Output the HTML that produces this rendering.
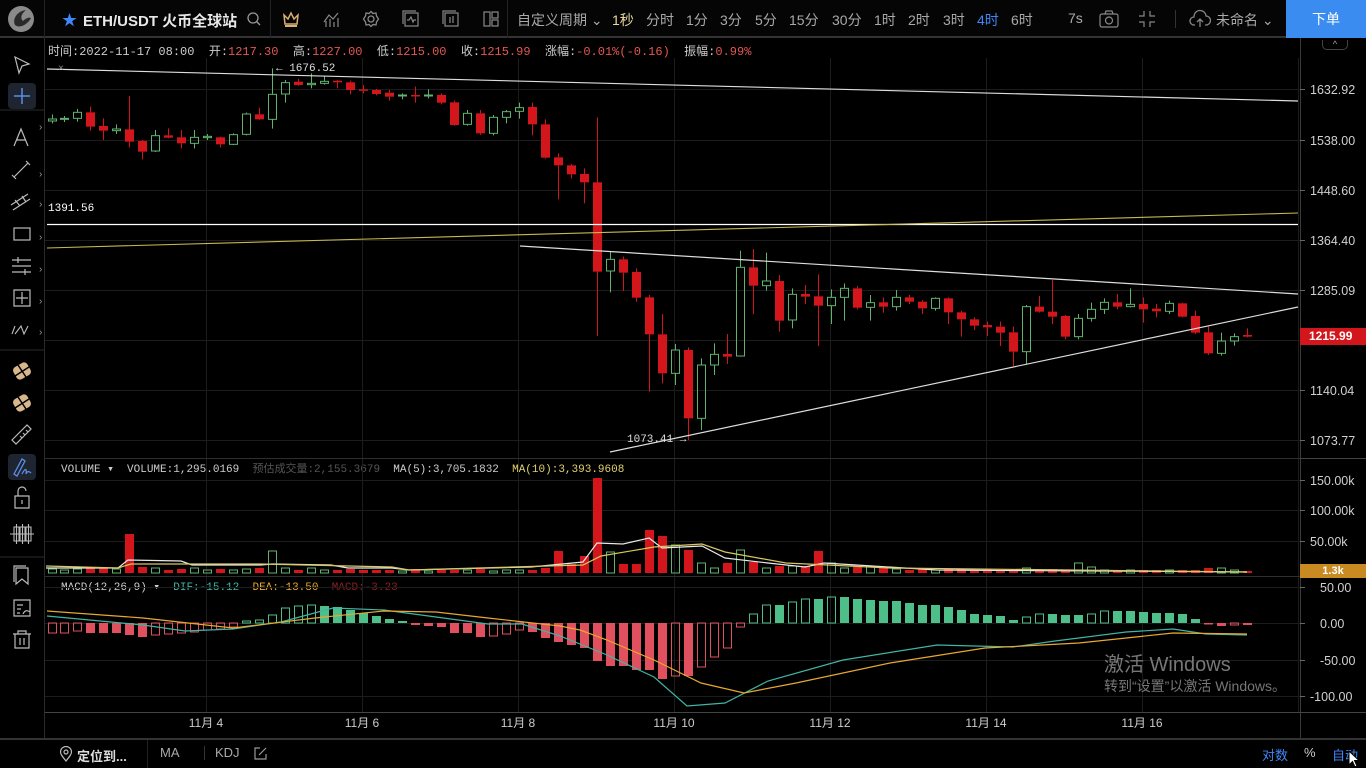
<!DOCTYPE html>
<html><head><meta charset="utf-8"><style>
*{margin:0;padding:0;box-sizing:border-box}
body{width:1366px;height:768px;background:#000;overflow:hidden;font-family:"Liberation Sans","Noto Sans CJK SC",sans-serif;color:#c8c8c8;position:relative}
.abs{position:absolute}
.top{left:0;top:0;width:1366px;height:38px;border-bottom:2px solid #333;background:#050505}
.ti{position:absolute;top:10px;font-size:14px;color:#a9a9a9;white-space:nowrap}
.mono{font-family:"Liberation Mono","Noto Sans CJK SC",monospace}
</style></head><body>
<div class="abs top">
  <div class="abs" style="left:44px;top:0;width:1px;height:38px;background:#222"></div>
  <svg class="abs" style="left:6px;top:4px" width="30" height="30" viewBox="0 0 30 30"><circle cx="15" cy="15" r="13" fill="#8a8a8a"/><path d="M9 21 C6 14 12 7 20 6 C15 10 14 14 17 17 C20 14 23 13 25 14 C22 20 14 25 9 21Z" fill="#2a2a2a"/></svg>
  <div class="ti" style="left:62px;top:9px;color:#3f86f7;font-size:15px">★</div>
  <div class="ti" style="left:83px;top:10px;color:#e8e8e8;font-weight:bold;font-size:15px">ETH/USDT 火币全球站</div>
  <svg class="abs" style="left:246px;top:11px" width="16" height="16" viewBox="0 0 16 16" fill="none" stroke="#999" stroke-width="1.3"><circle cx="7" cy="7" r="5"/><path d="M10.5 10.5 L14 14"/></svg>
  <div class="abs" style="left:270px;top:0;width:1px;height:38px;background:#222"></div>
  <svg class="abs" style="left:282px;top:10px" width="18" height="18" viewBox="0 0 18 18"><path d="M2 5 L6 9 L9 3 L12 9 L16 5 L15 14 L3 14Z" fill="none" stroke="#d8b070" stroke-width="1.5"/><rect x="3" y="15" width="12" height="2" fill="#d8b070"/></svg>
  <svg class="abs" style="left:322px;top:10px" width="18" height="18" viewBox="0 0 18 18" fill="none" stroke="#888" stroke-width="1.2"><path d="M2 12 L7 5 L11 9 L16 3"/><path d="M4 17V11M8 17V9M12 17V12M16 17V8"/></svg>
  <svg class="abs" style="left:362px;top:10px" width="18" height="18" viewBox="0 0 18 18" fill="none" stroke="#888" stroke-width="1.3"><circle cx="9" cy="9" r="3"/><path d="M9 1.5 L11 3.5 L14 3 L14.5 6 L16.5 9 L14.5 12 L14 15 L11 14.5 L9 16.5 L7 14.5 L4 15 L3.5 12 L1.5 9 L3.5 6 L4 3 L7 3.5Z"/></svg>
  <svg class="abs" style="left:402px;top:10px" width="18" height="18" viewBox="0 0 18 18" fill="none" stroke="#888" stroke-width="1.2"><rect x="3" y="3" width="13" height="13"/><path d="M1 14V1H14"/><path d="M5 10H7L9 7L11 12L12 10H14"/></svg>
  <svg class="abs" style="left:442px;top:10px" width="18" height="18" viewBox="0 0 18 18" fill="none" stroke="#888" stroke-width="1.2"><rect x="3" y="3" width="13" height="13"/><path d="M1 14V1H14"/><path d="M8 7V13M11 6V13"/></svg>
  <svg class="abs" style="left:482px;top:10px" width="18" height="18" viewBox="0 0 18 18" fill="none" stroke="#888" stroke-width="1.2"><rect x="2" y="2" width="6" height="14"/><rect x="10" y="2" width="6" height="6"/><rect x="10" y="10" width="6" height="6"/></svg>
  <div class="abs" style="left:507px;top:0;width:1px;height:38px;background:#222"></div>
  <div class="ti" style="left:517px">自定义周期 ⌄</div>
  <div class="ti" style="left:612px;color:#e8d9a0">1秒</div>
  <div class="ti" style="left:646px">分时</div>
  <div class="ti" style="left:686px">1分</div>
  <div class="ti" style="left:720px">3分</div>
  <div class="ti" style="left:755px">5分</div>
  <div class="ti" style="left:789px">15分</div>
  <div class="ti" style="left:832px">30分</div>
  <div class="ti" style="left:874px">1时</div>
  <div class="ti" style="left:908px">2时</div>
  <div class="ti" style="left:943px">3时</div>
  <div class="ti" style="left:977px;color:#3f86f7">4时</div>
  <div class="ti" style="left:1011px">6时</div>
  <div class="ti" style="left:1068px">7s</div>
  <svg class="abs" style="left:1099px;top:10px" width="20" height="18" viewBox="0 0 20 18" fill="none" stroke="#888" stroke-width="1.2"><rect x="1" y="4" width="18" height="13" rx="2"/><circle cx="10" cy="10.5" r="3.5"/><path d="M6 4 L7 1 H13 L14 4"/></svg>
  <svg class="abs" style="left:1138px;top:10px" width="18" height="18" viewBox="0 0 18 18" fill="none" stroke="#888" stroke-width="1.2"><path d="M6 1V6H1M12 1V6H17M6 17V12H1M12 17V12H17"/></svg>
  <div class="abs" style="left:1175px;top:10px;width:1px;height:18px;background:#333"></div>
  <svg class="abs" style="left:1189px;top:9px" width="22" height="20" viewBox="0 0 22 20" fill="none" stroke="#888" stroke-width="1.3"><path d="M6 16 H5 A4 4 0 0 1 5 8 A6 6 0 0 1 17 7 A4.5 4.5 0 0 1 17 16 H16"/><path d="M11 18 V10 M8 13 L11 10 L14 13"/></svg>
  <div class="ti" style="left:1216px">未命名 ⌄</div>
  <div class="abs" style="left:1286px;top:0;width:80px;height:38px;background:#3a8cf0;color:#fff;font-size:14px;text-align:center;line-height:38px">下单</div>
</div>
<div class="abs mono" style="left:48px;top:42px;font-size:12px;color:#ccc;white-space:nowrap">时间:2022-11-17 08:00 &nbsp;开:<span style="color:#e5574f">1217.30</span> &nbsp;高:<span style="color:#e5574f">1227.00</span> &nbsp;低:<span style="color:#e5574f">1215.00</span> &nbsp;收:<span style="color:#e5574f">1215.99</span> &nbsp;涨幅:<span style="color:#e5574f">-0.01%(-0.16)</span> &nbsp;振幅:<span style="color:#e5574f">0.99%</span></div>
<div class="abs mono" style="left:61px;top:460px;font-size:11px;color:#ccc;white-space:nowrap">VOLUME &#9662; &nbsp;VOLUME:1,295.0169 &nbsp;<span style="color:#555">预估成交量:2,155.3679</span> &nbsp;MA(5):3,705.1832 &nbsp;<span style="color:#e0d070">MA(10):3,393.9608</span></div>
<div class="abs mono" style="left:61px;top:580px;font-size:11px;color:#ccc;white-space:nowrap">MACD(12,26,9) &#9662; &nbsp;<span style="color:#3fb5a5">DIF:-15.12</span> &nbsp;<span style="color:#e8a830">DEA:-13.50</span> &nbsp;<span style="color:#8a2020">MACD:-3.23</span></div>
<svg id="ch" class="abs" style="left:0;top:0" width="1366" height="768"></svg>
<div class="abs" style="left:1104px;top:648px;font-size:20px;color:#777;white-space:nowrap">激活 Windows</div>
<div class="abs" style="left:1104px;top:676px;font-size:14px;color:#777;white-space:nowrap">转到“设置”以激活 Windows。</div>
<div class="abs" style="left:1300px;top:328px;width:66px;height:17px;background:#d3161c;color:#fff;font-size:12px;font-weight:bold;line-height:17px;padding-left:9px">1215.99</div>
<div class="abs" style="left:1300px;top:564px;width:66px;height:14px;background:#c98a22;color:#fff;font-size:11px;font-weight:bold;line-height:14px;text-align:center">1.3k</div>
<div class="abs" style="left:1322px;top:40px;width:26px;height:10px;border:1px solid #444;border-top:none;border-radius:0 0 5px 5px;font-size:9px;text-align:center;line-height:8px;color:#aaa">^</div>
<div class="abs" style="left:0;top:738px;width:1366px;height:30px;border-top:2px solid #333"></div>
<div class="abs" style="left:147px;top:740px;width:1px;height:28px;background:#222"></div>
<svg class="abs" style="left:59px;top:746px" width="14" height="16" viewBox="0 0 14 16" fill="none" stroke="#bbb" stroke-width="1.2"><path d="M7 15 C3 10 1.5 8 1.5 6 A5.5 5.5 0 0 1 12.5 6 C12.5 8 11 10 7 15Z"/><circle cx="7" cy="6" r="2"/></svg>
<div class="abs" style="left:77px;top:746px;font-size:13px;font-weight:bold;color:#ddd">定位到...</div>
<div class="abs" style="left:160px;top:745px;font-size:13px;color:#aaa">MA</div>
<div class="abs" style="left:204px;top:746px;width:1px;height:14px;background:#333"></div>
<div class="abs" style="left:215px;top:745px;font-size:13px;color:#aaa">KDJ</div>
<svg class="abs" style="left:254px;top:747px" width="13" height="13" viewBox="0 0 13 13" fill="none" stroke="#999" stroke-width="1.2"><path d="M6 1H1V12H12V7"/><path d="M5 8L12 1"/></svg>
<div class="abs" style="left:1262px;top:745px;font-size:13px;color:#3f86f7">对数</div>
<div class="abs" style="left:1304px;top:745px;font-size:13px;color:#ccc">%</div>
<div class="abs" style="left:1332px;top:745px;font-size:13px;color:#3f86f7">自动</div>
<svg class="abs" style="left:1348px;top:750px" width="14" height="18" viewBox="0 0 14 18"><path d="M1 1 L1 15 L4.5 11.5 L7 17 L9 16 L6.5 10.5 L11 10.5Z" fill="#fff" stroke="#000" stroke-width="1"/></svg>
<script>
const NS="http://www.w3.org/2000/svg",S=document.getElementById('ch');
function el(t,a,txt){const e=document.createElementNS(NS,t);for(const k in a)e.setAttribute(k,a[k]);if(txt!=null)e.textContent=txt;S.appendChild(e);return e;}
function line(x1,y1,x2,y2,c,w){el('line',{x1,y1,x2,y2,stroke:c,'stroke-width':w||1});}
function txt(x,y,s,c,sz,anc,fam){el('text',{x,y,fill:c||'#ccc','font-size':sz||12,'text-anchor':anc||'start','font-family':fam||'Liberation Sans, Noto Sans CJK SC, sans-serif'},s);}
line(44.5,38,44.5,738,'#2a2a2a');
[[0,110],[0,350],[0,557]].forEach(a=>line(0,a[1],44,a[1],'#2a2a2a'));
el('rect',{x:8,y:83,width:28,height:26,rx:4,fill:'#1e2530'});
el('rect',{x:8,y:454,width:28,height:26,rx:4,fill:'#1e2530'});
const ti=[
'<path d="M15 57 L29 64 L22 66 L19 73Z" fill="none" stroke="#bbb" stroke-width="1.2"/>',
'<path d="M22 88V104M14 96H30" stroke="#5a8ee6" stroke-width="1.5"/>',
'<path d="M14 146 L21 129 L28 146 M16.5 140H25.5" fill="none" stroke="#bbb" stroke-width="1.2"/>',
'<path d="M14 177 L28 163 M12 175l4 4M26 161l4 4" fill="none" stroke="#bbb" stroke-width="1.2"/>',
'<path d="M11 205 L28 194 M13 210 L30 199 M15 200l5 6M22 196l4 6" fill="none" stroke="#bbb" stroke-width="1.2"/>',
'<rect x="14" y="228" width="16" height="12" fill="none" stroke="#bbb" stroke-width="1.2"/>',
'<path d="M12 260H31M12 266H31M12 272H31M18 257V263M25 269V275" fill="none" stroke="#bbb" stroke-width="1.2"/>',
'<path d="M14 290H30V306H14Z M22 292V304M16 298H28" fill="none" stroke="#bbb" stroke-width="1.2"/>',
'<path d="M12 334l3 -8M15 334l6 -8l3 8l4 -8" fill="none" stroke="#bbb" stroke-width="1.1"/>',
'<g fill="#d8b88a"><rect x="14" y="364" width="16" height="14" rx="4" transform="rotate(-30 22 371)"/></g><path d="M15 376l14 -9M18 365l8 12" stroke="#000" stroke-width="1.5"/>',
'<g fill="#d8b88a"><rect x="14" y="396" width="16" height="14" rx="4" transform="rotate(-30 22 403)"/></g><path d="M15 408l14 -9M18 397l8 12" stroke="#000" stroke-width="1.5"/>',
'<path d="M12 440 L27 425 L31 429 L16 444Z M20 436l2 2M23 433l2 2M26 430l2 2" fill="none" stroke="#bbb" stroke-width="1.2"/>',
'<path d="M14 474 L22 459 L25 461 L17 476Z M22 474 C25 468 27 468 26 474 C27 471 29 471 31 473" fill="none" stroke="#5a8ee6" stroke-width="1.3"/>',
'<path d="M15 496H29V508H15Z M18 496V491A4 4 0 0 1 26 491 M22 500V504" fill="none" stroke="#bbb" stroke-width="1.2"/>',
'<path d="M10 534H34M14 527H19V541H14ZM20 527H25V541H20ZM26 527H31V541H26Z M16.5 524V544M22.5 524V544M28.5 524V544" fill="none" stroke="#bbb" stroke-width="1.1"/>',
'<path d="M16 568H28V584L22 579L16 584Z M14 582V566H26" fill="none" stroke="#bbb" stroke-width="1.2"/>',
'<path d="M14 600H30V616H14Z M17 605H23M17 609H21M17 613H20M23 614 C25 610 27 610 30 612" fill="none" stroke="#bbb" stroke-width="1.2"/>',
'<path d="M13 634H31M18 634V631H26V634M15 634V648H29V634M20 638V645M24 638V645" fill="none" stroke="#bbb" stroke-width="1.2"/>'];
S.insertAdjacentHTML('beforeend',ti.join(''));
[[39,126],[39,173],[39,203],[39,236],[39,268],[39,300],[39,331]].forEach(p=>txt(p[0],p[1]+4,'›','#999',10));
const hg=[89,140,190,240,290,340,390,440,480,510,541,587,623,660,696];
hg.forEach(y=>line(45,y+.5,1300,y+.5,'#1c1c1c'));
for(let x=206.5;x<1300;x+=156)line(x,58,x,712,'#1c1c1c');
line(45,458.5,1300,458.5,'#2e2e2e');line(45,576.5,1300,576.5,'#2e2e2e');
line(1300.5,38,1300.5,738,'#3a3a3a');line(45,712.5,1366,712.5,'#444');
const pl=[[89,'1632.92'],[140,'1538.00'],[190,'1448.60'],[240,'1364.40'],[290,'1285.09'],[390,'1140.04'],[440,'1073.77'],[480,'150.00k'],[510,'100.00k'],[541,'50.00k'],[587,'50.00'],[623,'0.00'],[660,'-50.00'],[696,'-100.00']];
pl.forEach(p=>{line(1300,p[0]+.5,1305,p[0]+.5,'#666');txt(p[1].length>6||p[1].endsWith('k')?1310:1320,p[0]+5,p[1],'#d0d0d0',12.5,'start');});
line(1300,458.5,1366,458.5,'#444');
['11月 4','11月 6','11月 8','11月 10','11月 12','11月 14','11月 16'].forEach((d,i)=>txt(206+i*156,727,d,'#ccc',12,'middle'));
const A=[[177,183,163,190,1],[175,178,168,186,1],[157,175,147,185,1],[157,200,140,212,0],[198,212,175,240,0],[207,212,193,222,1],[208,245,108,262,0],[243,275,240,298,0],[227,273,210,276,1],[226,233,205,235,0],[232,250,210,265,0],[232,250,210,265,1],[229,233,222,240,1],[232,253,230,262,0],[224,253,220,255,1],[162,223,158,226,1],[163,178,143,180,0],[103,178,25,206,1],[68,102,60,128,1],[65,75,57,77,0],[70,74,40,85,1],[64,70,48,74,1],[62,67,60,85,0],[67,90,62,103,0],[88,92,75,100,0],[90,102,87,106,0],[98,110,90,122,0],[105,108,100,118,1],[105,108,80,128,0],[105,108,88,115,1],[105,128,100,133,0],[127,195,122,197,0],[160,193,150,197,1],[160,220,150,225,0],[172,220,165,226,1],[155,172,150,190,1],[143,154,128,176,1],[141,193,128,226,0],[193,293,178,296,0],[292,316,280,418,0],[316,343,312,355,0],[342,367,325,430,0],[367,635,172,828,0],[598,633,575,697,1],[598,638,590,693,0],[636,713,625,725,0]];
const B=[[712,823,705,995,0],[823,940,762,970,0],[870,940,852,975,1],[870,1075,862,1140,0],[915,1075,895,1110,1],[883,915,850,945,1],[882,890,822,912,0],[622,888,572,890,1],[622,677,567,762,0],[663,677,578,692,1],[663,782,645,815,0],[703,780,685,805,1],[702,710,675,732,0],[709,737,643,858,0],[712,737,688,792,1],[685,712,670,782,1],[685,743,678,748,0],[728,742,705,782,1],[727,740,712,758,0],[712,740,690,752,1],[712,725,705,732,0],[725,745,720,762,0],[715,745,712,752,1],[715,757,712,792,0],[757,778,752,830,0],[778,797,772,810,0],[795,802,785,828,0],[800,818,785,858,0],[817,875,800,918,0],[740,875,735,912,1],[740,755,708,758,0],[755,770,660,792,0],[768,830,765,838,0],[775,830,762,838,1],[748,775,728,785,1],[727,748,715,762,1],[727,740,702,748,0],[733,740,685,742,1],[732,748,712,788,0],[746,754,732,772,0],[730,754,722,762,1],[730,770,728,772,0],[768,818,752,822,0],[817,880,800,885,0],[843,880,818,887,1],[830,843,820,857,1],[825,830,805,832,0]];
const C=A.concat(B);const X=i=>51.5+i*12.995;
const RED='#d3161c',GRN='#5fb36e';
C.forEach((c,i)=>{const x=Math.round(X(i))+.5,t=60+Math.min(c[0],c[1])/3,b=60+Math.max(c[0],c[1])/3,h=60+c[2]/3,l=60+c[3]/3,col=c[4]?GRN:RED;
 line(x,h,x,t,col);line(x,b,x,l,col);
 if(c[4])el('rect',{x:x-4,y:t,width:8,height:Math.max(1,b-t),fill:'none',stroke:col,'stroke-width':1});
 else el('rect',{x:x-4.5,y:t,width:9,height:Math.max(1.5,b-t),fill:col});});
line(47,69,1298,101,'#ddd',1.2);line(47,224.5,1298,224.5,'#fff',1.3);
line(47,248,1298,213,'#c8b850',1.1);line(520,246,1298,294,'#ddd',1.2);line(610,452,1298,307,'#ddd',1.2);
txt(48,211,'1391.56','#fff',11,'start','Liberation Mono, monospace');
txt(276,71,'← 1676.52','#ddd',11,'start','Liberation Mono, monospace');
txt(627,442,'1073.41 →','#ddd',11,'start','Liberation Mono, monospace');
txt(58,71,'×','#888',10);
const V=new Array(93).fill(4);
const vs={0:4,1:3,2:4,3:6,4:6,5:4,6:39,7:6,8:5,9:3,10:4,11:5,12:3,13:4,14:3,15:4,16:5,17:22,18:5,19:3,20:5,21:3,22:3,23:4,24:3,25:3,26:3,27:2,28:4,29:2,30:3,31:3,32:3,33:4,34:2,35:3,36:3,37:3,38:5,39:22,40:9,41:17,42:95,43:21,44:9,45:9,46:43,47:37,48:28,49:23,50:10,51:5,52:10,53:23,54:11,55:5,56:7,57:7,58:7,59:22,60:10,61:5,62:6,63:7,64:5,65:4,66:3,67:4,68:3,69:4,70:4,71:3,72:4,73:3,74:4,75:5,76:3,77:4,78:3,79:10,80:6,81:3,82:3,83:3,84:3,85:3,86:3,87:3,88:3,89:5,90:5,91:3,92:2};
for(const k in vs)V[k]=vs[k];
C.forEach((c,i)=>{const x=Math.round(X(i))+.5,h=V[i];
 if(c[4])el('rect',{x:x-4,y:573-h,width:8,height:h,fill:'none',stroke:GRN});
 else el('rect',{x:x-4.5,y:573-h,width:9,height:h,fill:RED});});
function pl2(pts,c){el('polyline',{points:pts.map(p=>p.join(',')).join(' '),fill:'none',stroke:c,'stroke-width':1.2});}
pl2([[46,568],[118,568],[128,560],[181,561],[192,565],[261,565],[272,564],[331,565],[348,568],[392,568],[409,570],[531,567],[583,562],[597,543],[623,544],[649,538],[662,548],[702,546],[725,558],[768,563],[805,567],[824,563],[937,570],[1247,572]],'#e8e8e8');
pl2([[46,566],[118,568],[131,564],[261,564],[392,567],[409,570],[583,565],[601,556],[654,547],[702,544],[725,552],[786,563],[890,568],[1247,572]],'#d8c860');
const M=[-10,-10,-8,-10,-10,-10,-12,-14,-12,-11,-10,-9,-7,-6,-4,2,3,8,15,17,18,17,16,13,10,7,4,2,-2,-3,-4,-10,-10,-14,-13,-11,-7,-9,-15,-19,-22,-25,-38,-43,-43,-47,-47,-56,-53,-53,-44,-34,-25,-4,9,18,18,21,24,24,26,26,24,23,22,22,20,18,18,16,13,9,8,7,3,6,9,9,8,8,9,12,12,12,11,10,10,9,4,-1,-3,-2,-2];
const MR='#e0505f',MG='#4fbf8a';
M.forEach((v,i)=>{const x=Math.round(X(i))+.5,p=i?M[i-1]:v;let hollow=v>p;
 if(i<3)hollow=true;
 const col=v>=0?MG:MR,y=v>=0?623-v:623,h=Math.max(1.5,Math.abs(v));
 if(hollow)el('rect',{x:x-4,y:y,width:8,height:h,fill:'none',stroke:col});
 else el('rect',{x:x-4.5,y:y,width:9,height:h,fill:col});});
pl2([[47,616],[143,625],[185,631],[233,629],[281,622],[333,608],[384,610],[436,617],[488,624],[522,624],[560,636],[580,644],[607,655],[654,677],[687,706],[725,703],[768,681],[843,660],[937,645],[1013,647],[1055,641],[1126,632],[1173,629],[1206,634],[1247,635]],'#3fb5a5');
pl2([[47,611],[143,618],[233,628],[315,618],[384,611],[436,612],[488,618],[560,626],[580,630],[607,640],[654,660],[701,683],[744,693],[796,683],[890,663],[985,648],[1079,643],[1173,633],[1247,634]],'#e8a830');
</script>
</body></html>
